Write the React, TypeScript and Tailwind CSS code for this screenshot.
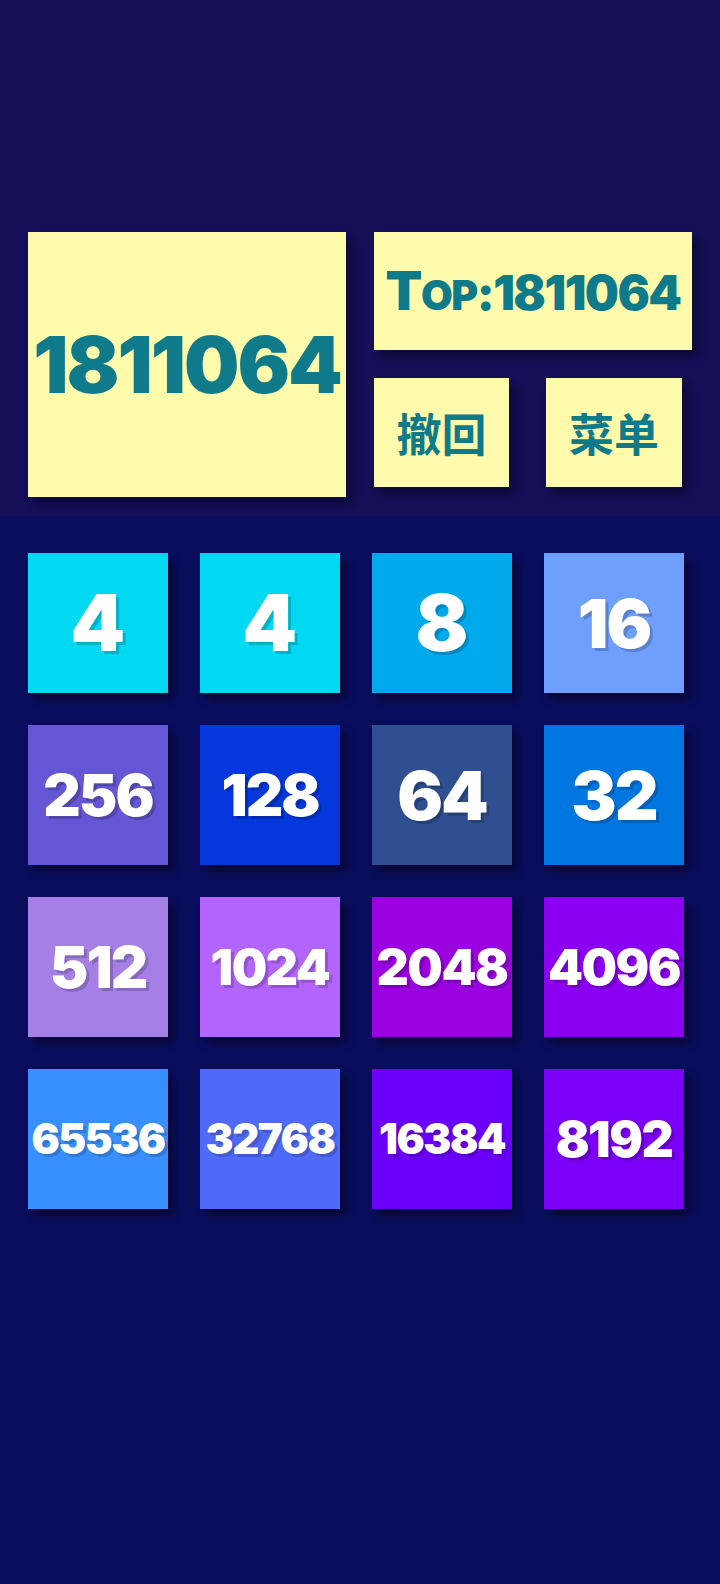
import React from "react";

const tiles = [
  { v: "4", bg: "bg-[#01d9f2]" },
  { v: "4", bg: "bg-[#01d9f2]" },
  { v: "8", bg: "bg-[#00a8ec]" },
  { v: "16", bg: "bg-[#6f9ffc]" },
  { v: "256", bg: "bg-[#6456d4]" },
  { v: "128", bg: "bg-[#0538dc]" },
  { v: "64", bg: "bg-[#2f4f91]" },
  { v: "32", bg: "bg-[#0077e0]" },
  { v: "512", bg: "bg-[#a57fe6]" },
  { v: "1024", bg: "bg-[#b264fd]" },
  { v: "2048", bg: "bg-[#9a02e0]" },
  { v: "4096", bg: "bg-[#8b00f0]" },
  { v: "65536", bg: "bg-[#3790fd]" },
  { v: "32768", bg: "bg-[#4f6af8]" },
  { v: "16384", bg: "bg-[#6a00fc]" },
  { v: "8192", bg: "bg-[#7c00f8]" },
];

const sizeFor: Record<number, string> = {
  1: "text-[78px]",
  2: "text-[68px] tracking-[-2px]",
  3: "text-[58px] tracking-[-2px]",
  4: "text-[50px] tracking-[-1.5px]",
  5: "text-[42px] tracking-[-1.5px]",
};

function Tile({ v, bg }: { v: string; bg: string }) {
  return (
    <div
      className={`${bg} w-[140px] h-[140px] flex items-center justify-center shadow-[6px_7px_8px_rgba(0,0,0,0.4)]`}
    >
      <span
        className={`${sizeFor[v.length]} font-black text-white leading-none [text-shadow:3px_3px_0_rgba(0,0,0,0.18)]`}
      >
        {v}
      </span>
    </div>
  );
}

export default function App() {
  return (
    <div className="min-h-[1584px] bg-[#0a0d5c] font-['Inter','Noto_Sans_CJK_SC',sans-serif]">
      {/* Header */}
      <div className="h-[516px] bg-[#140f57] pt-[232px] px-[28px]">
        <div className="flex gap-[28px]">
          <div className="w-[318px] h-[265px] bg-[#fdfbab] flex items-center justify-center shadow-[6px_7px_8px_rgba(0,0,0,0.35)]">
            <span className="text-[78px] font-black text-[#0f7a8a] tracking-[-2px] leading-none">1811064</span>
          </div>
          <div className="w-[318px] flex flex-col">
            <div className="h-[118px] bg-[#fdfbab] flex items-center justify-center shadow-[6px_7px_8px_rgba(0,0,0,0.35)]">
              <span className="font-black text-[#0f7a8a] leading-none tracking-[-1.5px] flex items-baseline">
                <span className="text-[54px]">T</span>
                <span className="text-[41px]">OP</span>
                <span className="text-[48px]">:1811064</span>
              </span>
            </div>
            <div className="mt-[28px] flex gap-[37px]">
              <div className="w-[135px] h-[109px] bg-[#fdfbab] flex items-center justify-center shadow-[6px_7px_8px_rgba(0,0,0,0.35)]">
                <span className="text-[45px] font-bold text-[#0f7a8a] leading-none font-['Noto_Sans_CJK_SC',sans-serif]">撤回</span>
              </div>
              <div className="w-[136px] h-[109px] bg-[#fdfbab] flex items-center justify-center shadow-[6px_7px_8px_rgba(0,0,0,0.35)]">
                <span className="text-[45px] font-bold text-[#0f7a8a] leading-none font-['Noto_Sans_CJK_SC',sans-serif]">菜单</span>
              </div>
            </div>
          </div>
        </div>
      </div>

      {/* Board */}
      <div className="grid grid-cols-[repeat(4,140px)] gap-[32px] pl-[28px] pt-[37px]">
        {tiles.map((t, i) => (
          <Tile key={i} v={t.v} bg={t.bg} />
        ))}
      </div>
    </div>
  );
}
